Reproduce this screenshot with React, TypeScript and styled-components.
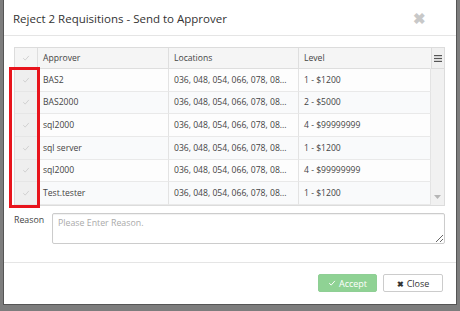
import React from "react";
import styled, { createGlobalStyle } from "styled-components";

const Global = createGlobalStyle`
  html, body { margin: 0; padding: 0; background: #7a7a7a; }
  body { font-family: "Open Sans", "Noto Sans", Arial, sans-serif; color: #333; }
  * { box-sizing: border-box; }
`;

const Backdrop = styled.div`
  width: 460px;
  height: 311px;
  background: #7d7d7d;
  padding: 0 3px 0 3px;
  overflow: hidden;
`;

const Modal = styled.div`
  width: 454px;
  height: 305px;
  background: #fff;
  border: 1px solid #555;
  border-top: none;
  display: flex;
  flex-direction: column;
  position: relative;
`;

const Header = styled.div`
  height: 36px;
  border-bottom: 1px solid #e5e5e5;
  display: flex;
  align-items: center;
  justify-content: space-between;
  padding: 0 30px 0 9px;
`;

const Title = styled.div`
  font-size: 11.5px;
  color: #333;
  padding-top: 2px;
`;

const CloseX = styled.span`
  font-size: 15px;
  font-weight: bold;
  color: #c8c8c8;
  line-height: 1;
  padding-top: 2px;
`;

const Body = styled.div`
  padding: 11px 9px 0 10px;
  display: flex;
  flex-direction: column;
`;

const Grid = styled.div`
  width: 431px;
  border: 1px solid #dcdcdc;
  display: grid;
  grid-template-columns: 23px 131px 130px 132px 1fr;
  font-size: 8.6px;
  color: #444;
  position: relative;
`;

const HeadCell = styled.div<{ $last?: boolean }>`
  height: 21px;
  background: #f5f5f5;
  border-right: 1px solid ${(p) => (p.$last ? "transparent" : "#dedede")};
  border-bottom: 1px solid #dedede;
  display: flex;
  align-items: center;
  padding-left: 5px;
  color: #444;
`;

const CheckCell = styled.div<{ $head?: boolean }>`
  grid-column: 1;
  height: ${(p) => (p.$head ? "21px" : "22.67px")};
  background: ${(p) => (p.$head ? "#f5f5f5" : "#efefef")};
  border-right: 1px solid #dedede;
  border-bottom: 1px solid #e6e6e6;
  display: flex;
  align-items: center;
  justify-content: center;
`;

const Cell = styled.div<{ $alt?: boolean }>`
  height: 22.67px;
  background: ${(p) => (p.$alt ? "#f9fafb" : "#fdfdfd")};
  border-right: 1px solid #e3e3e3;
  border-bottom: 1px solid #e9e9e9;
  display: flex;
  align-items: center;
  padding-left: 5px;
  white-space: nowrap;
  overflow: hidden;
`;

const MenuCell = styled.div`
  height: 21px;
  background: #f0f0f0;
  border-left: 1px solid #dcdcdc;
  border-bottom: 1px solid #dcdcdc;
  display: flex;
  align-items: center;
  justify-content: center;
`;

const ScrollTrack = styled.div`
  grid-column: 5;
  grid-row: 2 / span 6;
  background: #f1f1f1;
  display: flex;
  align-items: flex-end;
  justify-content: center;
  padding-bottom: 6px;
`;

const Highlight = styled.div`
  position: absolute;
  left: -6px;
  top: 19px;
  width: 31px;
  height: 141px;
  border: 3px solid #e8141c;
  pointer-events: none;
`;

const ReasonRow = styled.div`
  display: flex;
  gap: 9px;
  margin-top: 7px;
`;

const Label = styled.label`
  font-size: 8.8px;
  color: #444;
  width: 29px;
  padding-top: 1px;
`;

const TextArea = styled.textarea`
  width: 393px;
  height: 31px;
  border: 1px solid #ccc;
  border-radius: 2px;
  font-family: "Open Sans", Arial, sans-serif;
  font-size: 8.8px;
  padding: 3px 5px;
  resize: vertical;
  box-shadow: inset 0 1px 1px rgba(0, 0, 0, 0.06);
  &::placeholder { color: #aaa; }
`;

const Footer = styled.div`
  margin-top: auto;
  height: 42px;
  border-top: 1px solid #e5e5e5;
  display: flex;
  justify-content: flex-end;
  align-items: center;
  gap: 6px;
  padding: 0 13px 1px 0;
`;

const Button = styled.button<{ $primary?: boolean }>`
  height: 18px;
  font-family: "Open Sans", Arial, sans-serif;
  font-size: 9px;
  border-radius: 2px;
  display: flex;
  align-items: center;
  justify-content: center;
  gap: 3px;
  padding: 0;
  border: 1px solid ${(p) => (p.$primary ? "#8fcf95" : "#ccc")};
  background: ${(p) => (p.$primary ? "#8fd294" : "#fff")};
  color: ${(p) => (p.$primary ? "#fff" : "#333")};
  width: ${(p) => (p.$primary ? "59px" : "60px")};
`;

const XGlyph = styled.span`
  font-size: 8px;
  font-weight: 700;
`;

const Check = ({ color = "#d0d0d0", size = 8 }: { color?: string; size?: number }) => (
  <svg width={size} height={size} viewBox="0 0 10 10">
    <path d="M1.5 5.2 L4 7.6 L8.6 2.4" fill="none" stroke={color} strokeWidth="1.2" />
  </svg>
);

const rows = [
  ["BAS2", "1 - $1200"],
  ["BAS2000", "2 - $5000"],
  ["sql2000", "4 - $99999999"],
  ["sql server", "1 - $1200"],
  ["sql2000", "4 - $99999999"],
  ["Test.tester", "1 - $1200"],
];

export default function App() {
  return (
    <>
      <Global />
      <Backdrop>
        <Modal>
          <Header>
            <Title>Reject 2 Requisitions - Send to Approver</Title>
            <CloseX>✖</CloseX>
          </Header>
          <Body>
            <Grid>
              <CheckCell $head><Check /></CheckCell>
              <HeadCell>Approver</HeadCell>
              <HeadCell>Locations</HeadCell>
              <HeadCell $last>Level</HeadCell>
              <MenuCell>
                <svg width="8" height="7" viewBox="0 0 8 7">
                  <rect x="0" y="0" width="8" height="1.2" fill="#555" />
                  <rect x="0" y="2.9" width="8" height="1.2" fill="#555" />
                  <rect x="0" y="5.8" width="8" height="1.2" fill="#555" />
                </svg>
              </MenuCell>
              {rows.map((r, i) => (
                <React.Fragment key={i}>
                  <CheckCell><Check /></CheckCell>
                  <Cell $alt={i % 2 === 1}>{r[0]}</Cell>
                  <Cell $alt={i % 2 === 1}>036, 048, 054, 066, 078, 08...</Cell>
                  <Cell $alt={i % 2 === 1}>{r[1]}</Cell>
                </React.Fragment>
              ))}
              <ScrollTrack>
                <svg width="7" height="4" viewBox="0 0 7 4">
                  <path d="M0 0 L7 0 L3.5 4 Z" fill="#b5b5b5" />
                </svg>
              </ScrollTrack>
              <Highlight />
            </Grid>
            <ReasonRow>
              <Label>Reason</Label>
              <TextArea placeholder="Please Enter Reason." />
            </ReasonRow>
          </Body>
          <Footer>
            <Button $primary><Check color="#fff" size={8} />Accept</Button>
            <Button><XGlyph>✖</XGlyph>Close</Button>
          </Footer>
        </Modal>
      </Backdrop>
    </>
  );
}
